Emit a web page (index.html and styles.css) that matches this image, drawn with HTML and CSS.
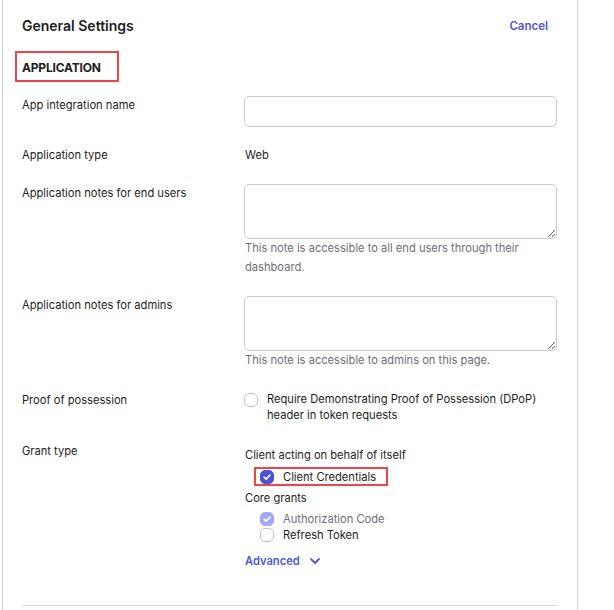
FILE: index.html
```html
<!DOCTYPE html>
<html lang="en">
<head>
<meta charset="utf-8">
<title>General Settings</title>
<link rel="stylesheet" href="styles.css">
</head>
<body>
<div class="card">
  <div class="header">
    <h2 class="title">General Settings</h2>
    <a class="cancel" href="#">Cancel</a>
  </div>
  <div class="section-wrap">
    <h3 class="section">APPLICATION</h3>
    <span class="mark mark-section"></span>
  </div>
  <div class="form">
    <div class="row">
      <div class="label">App integration name</div>
      <div class="field"><input class="input" type="text"></div>
    </div>
    <div class="row">
      <div class="label">Application type</div>
      <div class="field value">Web</div>
    </div>
    <div class="row row-gap-20">
      <div class="label">Application notes for end users</div>
      <div class="field">
        <textarea class="textarea"></textarea>
        <p class="help">This note is accessible to all end users through their<br>dashboard.</p>
      </div>
    </div>
    <div class="row">
      <div class="label">Application notes for admins</div>
      <div class="field">
        <textarea class="textarea"></textarea>
        <p class="help">This note is accessible to admins on this page.</p>
      </div>
    </div>
    <div class="row row-gap-21">
      <div class="label">Proof of possession</div>
      <div class="field">
        <label class="check check-dpop">
          <span class="box"></span>
          <span class="check-text">Require Demonstrating Proof of Possession (DPoP)<br>header in token requests</span>
        </label>
      </div>
    </div>
    <div class="row">
      <div class="label">Grant type</div>
      <div class="field grants">
        <div class="group-title">Client acting on behalf of itself</div>
        <div class="grant-list grant-list-first">
          <label class="check grant">
            <span class="box box-on"><svg viewBox="0 0 14 14" class="tick"><path d="M3.6 7.2 6 9.5 10.4 4.8"/></svg></span>
            <span class="check-text">Client Credentials</span>
            <span class="mark mark-cred"></span>
          </label>
        </div>
        <div class="group-title">Core grants</div>
        <div class="grant-list grant-list-core">
          <label class="check grant disabled">
            <span class="box box-dis"><svg viewBox="0 0 14 14" class="tick"><path d="M3.6 7.2 6 9.5 10.4 4.8"/></svg></span>
            <span class="check-text">Authorization Code</span>
          </label>
          <label class="check grant">
            <span class="box"></span>
            <span class="check-text">Refresh Token</span>
          </label>
        </div>
        <a class="advanced" href="#">Advanced <svg class="chev" viewBox="0 0 12 8"><path d="M2 2 6 6 10 2"/></svg></a>
      </div>
    </div>
  </div>
  <div class="divider"></div>
</div>
</body>
</html>
```
FILE: styles.css
```css
* { box-sizing: border-box; }
html, body { margin: 0; padding: 0; background: #ffffff; }
body {
  font-family: Inter, "Noto Sans", "Liberation Sans", sans-serif;
  color: #1d1d21;
  font-size: 11.15px;
}
.card {
  margin-left: 2px;
  width: 576px;
  height: 610px;
  border-left: 1px solid #cfcfcf;
  border-right: 1px solid #cfcfcf;
  padding: 15px 20px 0 19px;
  position: relative;
}
.header {
  display: flex;
  justify-content: space-between;
  align-items: center;
  height: 20px;
}
.title {
  margin: 0;
  font-size: 14px;
  font-weight: 600;
  letter-spacing: 0;
  color: #1d1d21;
}
.cancel {
  font-size: 11.5px;
  font-weight: 600;
  color: #5056d8;
  text-decoration: none;
  margin-right: 9px;
  margin-top: 1px;
}
.section-wrap {
  position: relative;
  margin-top: 23px;
  height: 20px;
}
.section {
  margin: 0;
  font-size: 12px;
  font-weight: 700;
  line-height: 20px;
  letter-spacing: -0.2px;
  color: #1d1d21;
}
.mark {
  position: absolute;
  border: 2px solid #f04548;
  pointer-events: none;
}
.mark-section {
  left: -7px;
  top: -7px;
  width: 104px;
  height: 31px;
}
.form {
  margin-top: 18px;
  display: flex;
  flex-direction: column;
  gap: 19px;
}
.row {
  display: grid;
  grid-template-columns: 222px 1fr;
}
.row-gap-20 { margin-top: 1px; }
.row-gap-21 { margin-top: 2px; }
.label {
  line-height: 18px;
  color: #1d1d21;
}
.value { line-height: 18px; padding-left: 1px; }
.input {
  display: block;
  width: 100%;
  height: 31px;
  border: 1px solid #cccccc;
  border-radius: 5px;
  background: #fff;
  font: inherit;
}
.textarea {
  display: block;
  width: 100%;
  height: 55px;
  border: 1px solid #cccccc;
  border-radius: 5px;
  background: #fff;
  font: inherit;
  resize: vertical;
  margin: 0;
}
.help {
  margin: 0;
  padding-left: 1px;
  line-height: 19px;
  color: #6e6e78;
}
.check {
  display: flex;
  align-items: flex-start;
  position: relative;
}
.check-dpop .box { margin-top: 2px; }
.check-dpop .check-text {
  line-height: 16px;
  margin-left: 9px;
  white-space: nowrap;
}
.box {
  flex: none;
  width: 14px;
  height: 14px;
  border: 1px solid #c4c4c8;
  border-radius: 5px;
  background: #fff;
  display: flex;
  align-items: center;
  justify-content: center;
}
.box-on { background: #4a52d6; border-color: #4a52d6; }
.box-dis { background: #a4a8f0; border-color: #a4a8f0; }
.tick { width: 14px; height: 14px; }
.tick path { fill: none; stroke: #fff; stroke-width: 1.8; stroke-linecap: round; stroke-linejoin: round; }
.grants { padding-top: 4px; padding-left: 1px; }
.group-title { line-height: 18px; }
.grant-list { padding-left: 15px; }
.grant-list-first { margin: 5px 0 4px; }
.grant-list-core { margin-top: 4px; }
.grant { align-items: center; height: 16px; }
.grant .check-text { margin-left: 9px; line-height: 16px; }
.disabled .check-text { color: #6e6e78; }
.mark-cred {
  left: -6px;
  top: -2px;
  width: 134px;
  height: 19px;
}
.advanced {
  display: inline-flex;
  align-items: center;
  margin-top: 9px;
  font-weight: 600;
  color: #5056d8;
  text-decoration: none;
  line-height: 18px;
}
.chev { width: 12px; height: 8px; margin-left: 9px; }
.chev path { fill: none; stroke: #5056d8; stroke-width: 1.8; stroke-linecap: round; stroke-linejoin: round; }
.divider {
  position: absolute;
  left: 19px;
  right: 20px;
  top: 605px;
  border-top: 1px solid #dcdcdc;
}
```
